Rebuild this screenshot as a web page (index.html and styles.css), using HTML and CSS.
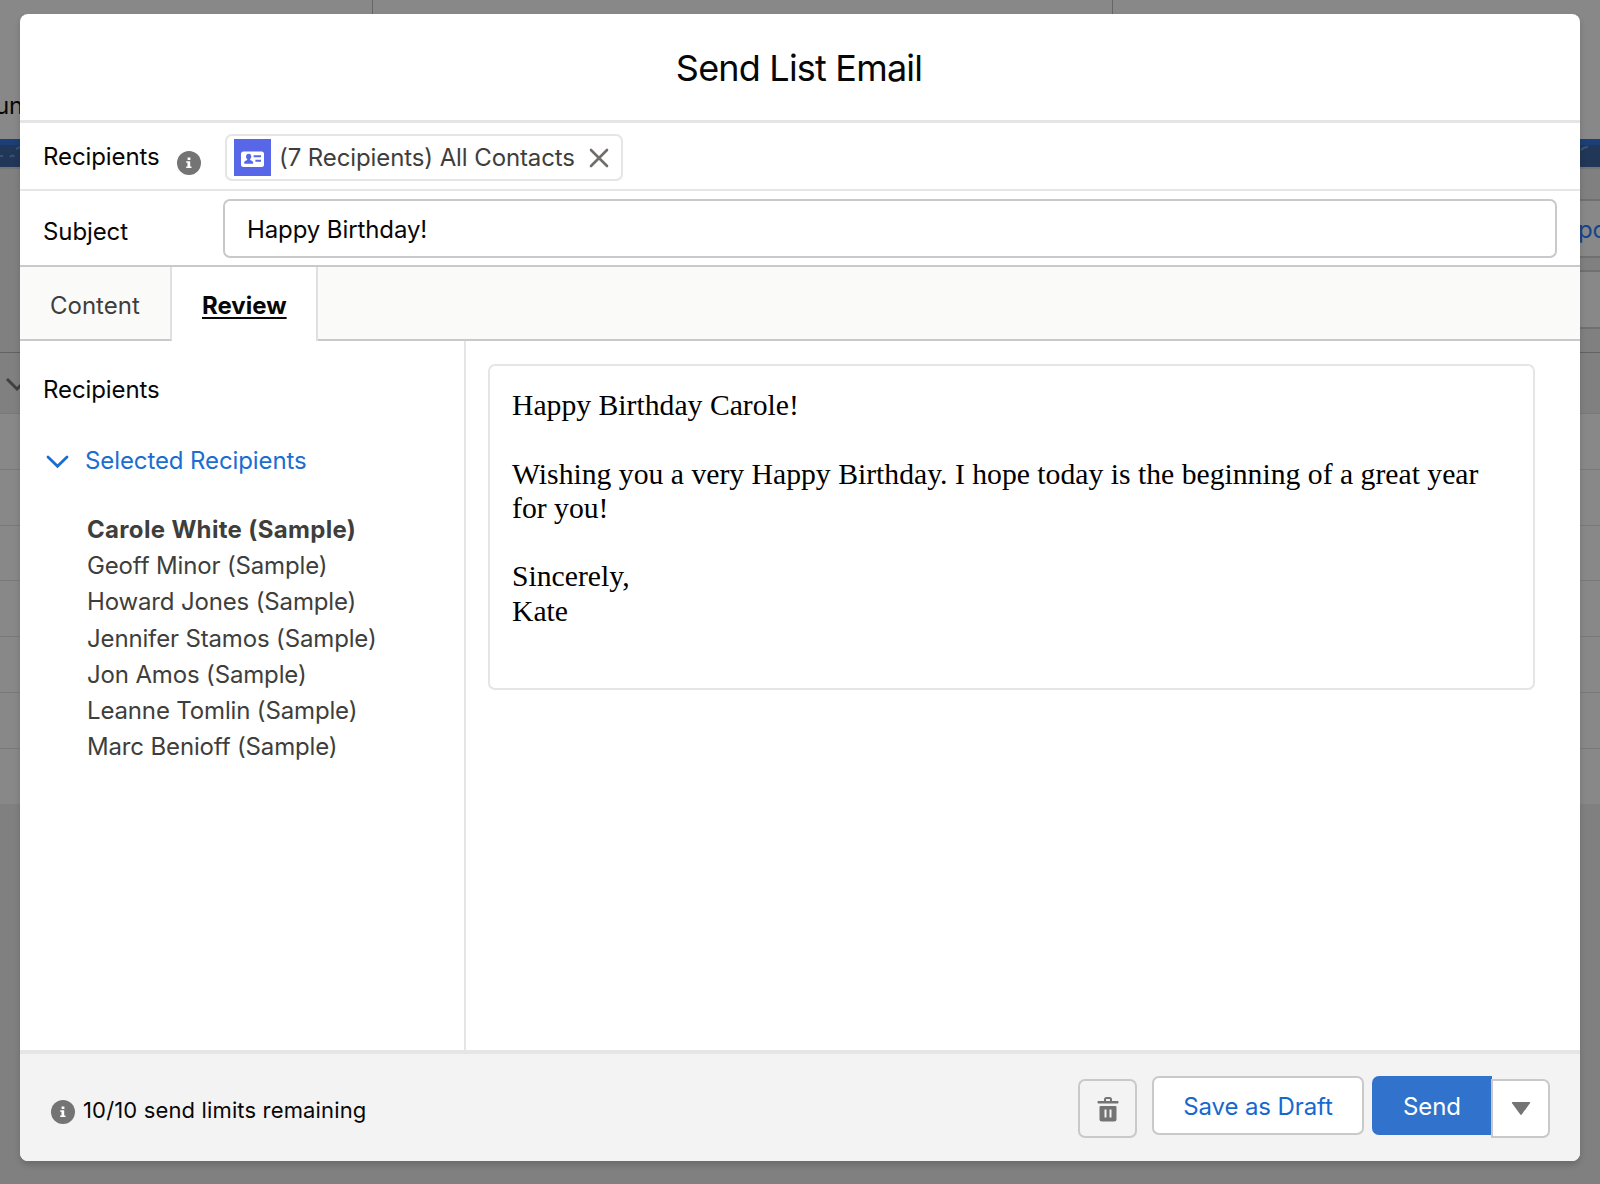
FILE: index.html
```html
<!DOCTYPE html>
<html lang="en">

<head>
    <meta charset="UTF-8">
    <meta name="viewport" content="width=device-width, initial-scale=1.0">
    <title>Send List Email</title>
    <link rel="stylesheet" href="styles.css">
</head>

<body>
    <!-- dimmed page behind the modal -->
    <div class="page">
        <div class="page-top">
            <div class="page-cols">
                <div></div>
                <div></div>
            </div>
            <div class="page-nav">un</div>
        </div>
        <div class="page-banner">
            <svg width="20" height="22" viewBox="0 0 20 22"><path d="M0 11h3M10 12q3-3 4 0M16 4l4-2" /></svg>
            <svg width="20" height="22" viewBox="0 0 20 22"><path d="M1 5q3-3 7-3" /></svg>
        </div>
        <div class="page-tools">
            <div class="page-button">pc</div>
            <div class="page-search"></div>
        </div>
        <div class="page-head">
            <svg width="24" height="16" viewBox="0 0 24 16"><path d="M2 2l10 10L22 2" /></svg>
        </div>
        <div class="page-row"></div>
        <div class="page-row"></div>
        <div class="page-row"></div>
        <div class="page-row"></div>
        <div class="page-row"></div>
        <div class="page-row"></div>
        <div class="page-row"></div>
    </div>

    <div class="modal">
        <div class="header">Send List Email</div>

        <div class="field recipients">
            <div class="label">Recipients</div>
            <svg class="info" viewBox="0 0 24 24">
                <circle cx="12" cy="12" r="12" />
                <path d="M10.6 6.4h2.8v2.6h-2.8zM9.2 10.2h4v5.4h1.3v1.5H9.2v-1.5h1.3v-3.9H9.2z" />
            </svg>
            <div class="pill">
                <svg class="contact" viewBox="0 0 37 37">
                    <rect class="contact-bg" width="37" height="37" />
                    <rect class="contact-card" x="7" y="12.5" width="23" height="15.5" rx="2.5" />
                    <path class="contact-bg" d="M14.7 14.7c1.6 0 2.6 1.2 2.6 2.8 0 1.3-.6 2-1.2 2.7-.3.5 0 .9.5 1.1 1.6.6 2.6 1.2 2.6 2.5 0 .7-.4 1-1 1h-7.1c-.6 0-1-.3-1-1 0-1.3 1.1-1.9 2.6-2.5.5-.2.8-.6.5-1.1-.7-.7-1.2-1.4-1.2-2.7 0-1.6 1.1-2.8 2.7-2.8zM19.6 16.2h7.4v2h-7.4zM21.4 20.8H27v2h-5.6z" />
                </svg>
                <span class="pill-text">(7 Recipients) All Contacts</span>
                <svg class="close" viewBox="0 0 20 20"><path d="M2 2l16 16M18 2L2 18" /></svg>
            </div>
        </div>

        <div class="field subject">
            <div class="label">Subject</div>
            <div class="input">Happy Birthday!</div>
        </div>

        <div class="tabs">
            <div class="tab">Content</div>
            <div class="tab active">Review</div>
            <div class="tab-rest"></div>
        </div>

        <div class="body">
            <div class="sidebar">
                <div class="side-title">Recipients</div>
                <div class="side-toggle">
                    <svg class="chevron" viewBox="0 0 22 14"><path d="M1.5 2L11 11.2 20.5 2" /></svg>
                    <span>Selected Recipients</span>
                </div>
                <div class="names">
                    <div class="name selected">Carole White (Sample)</div>
                    <div class="name">Geoff Minor (Sample)</div>
                    <div class="name">Howard Jones (Sample)</div>
                    <div class="name">Jennifer Stamos (Sample)</div>
                    <div class="name">Jon Amos (Sample)</div>
                    <div class="name">Leanne Tomlin (Sample)</div>
                    <div class="name">Marc Benioff (Sample)</div>
                </div>
            </div>
            <div class="preview-area">
                <div class="preview">
                    Happy Birthday Carole!<br><br>
                    Wishing you a very Happy Birthday. I hope today is the beginning of a great year<br>for you!<br><br>
                    Sincerely,<br>
                    Kate
                </div>
            </div>
        </div>

        <div class="footer">
            <svg class="info" viewBox="0 0 24 24">
                <circle cx="12" cy="12" r="12" />
                <path d="M10.6 6.4h2.8v2.6h-2.8zM9.2 10.2h4v5.4h1.3v1.5H9.2v-1.5h1.3v-3.9H9.2z" />
            </svg>
            <span class="limits">10/10 send limits remaining</span>
            <div class="button trash">
                <svg width="22" height="26" viewBox="0 0 22 26">
                    <path class="trash-handle" d="M8 5V3.5Q8 2 9.500 2h3Q14 2 14 3.500V5" />
                    <path d="M1.300 5h19.400q.8 0 .8.800v.8q0 .8-.8.800H1.300Q.5 7.400.5 6.600v-.8Q.5 5 1.300 5zM2.500 11q0-1 1-1h15q1 0 1 1v12q0 2.500-2.500 2.500H5Q2.500 25.500 2.500 23zM7.500 13.500v8h2v-8zM12.500 13.500v8h2v-8z" fill-rule="evenodd" />
                </svg>
            </div>
            <div class="button draft">Save as Draft</div>
            <div class="button send">Send</div>
            <div class="button more">
                <svg width="20" height="14" viewBox="0 0 20 14"><path d="M1.5 0h17q1.2 0 .4 1.200L10.900 12.300q-.9 1.200-1.800 0L1.100 1.200Q.3 0 1.500 0z" /></svg>
            </div>
        </div>
    </div>
</body>

</html>
```
FILE: styles.css
```css
* {
    box-sizing: border-box;
}

body {
    margin: 0;
    height: 1184px;
    overflow: hidden;
    position: relative;
    background-color: #808080;
    font-family: Inter, Arial, sans-serif;
    font-size: 24px;
    letter-spacing: -0.1px;
    color: #080707;
}

svg {
    display: block;
    flex-shrink: 0;
}

/*----- page behind -----*/
.page-top {
    height: 139px;
    background-color: #888888;
}

.page-cols {
    display: grid;
    grid-template-columns: 373px 740px;
    height: 90px;
}

.page-cols div {
    border-right: 1px solid #666666;
}

.page-nav {
    margin-left: -5px;
    line-height: 32px;
}

.page-banner {
    height: 28px;
    border-top: 6px solid #1b3f76;
    background-color: #203757;
    display: flex;
    justify-content: space-between;
}

.page-banner path {
    fill: none;
    stroke: #3d5270;
    stroke-width: 2;
}

.page-tools {
    height: 186px;
    border-top: 2px solid #757575;
    border-bottom: 1px solid #626262;
    padding: 30px 0 0 1560px;
}

.page-button {
    height: 59px;
    border: 2px solid #707070;
    border-right: 0;
    background-color: #888888;
    color: #14458a;
    padding-left: 16px;
    line-height: 57px;
}

.page-search {
    height: 59px;
    margin-top: 12px;
    border: 2px solid #707070;
    border-right: 0;
    background-color: #888888;
}

.page-head {
    height: 60px;
    padding: 24px 0 0 5px;
}

.page-head path {
    fill: none;
    stroke: #404040;
    stroke-width: 3;
}

.page-row {
    height: 55.8px;
    border-top: 1px solid #797979;
    background-color: #888888;
}

/*----- modal -----*/
.modal {
    position: absolute;
    top: 14px;
    left: 20px;
    width: 1560px;
    height: 1147px;
    display: flex;
    flex-direction: column;
    overflow: hidden;
    border-radius: 8px;
    background-color: white;
    box-shadow: 0 4px 6px rgba(0, 0, 0, 0.16);
}

.header {
    height: 109px;
    padding-right: 2px;
    border-bottom: 3px solid #e5e5e5;
    text-align: center;
    font-size: 36px;
    line-height: 108px;
    letter-spacing: -0.8px;
}

.field {
    display: flex;
    padding-left: 23px;
}

.recipients {
    height: 68px;
    border-bottom: 2px solid #e5e5e5;
    padding-top: 11px;
}

.label {
    line-height: 46px;
}

.info {
    width: 24px;
    height: 24px;
    fill: #747474;
}

.info path {
    fill: white;
}

.recipients .label {
    width: 134px;
}

.recipients .info {
    margin-top: 17px;
}

.pill {
    display: flex;
    align-items: center;
    width: 398px;
    height: 47px;
    margin-left: 24px;
    padding-left: 7px;
    border: 2px solid #e5e5e5;
    border-radius: 7px;
    color: #3e3e3c;
}

.contact {
    width: 37px;
    height: 37px;
}

.contact-bg {
    fill: #5867e8;
}

.contact-card {
    fill: white;
}

.pill-text {
    width: 308px;
    padding-left: 8px;
    white-space: nowrap;
}

.close {
    width: 20px;
    height: 20px;
    margin-left: 10px;
    fill: none;
    stroke: #706e6b;
    stroke-width: 2.6;
    stroke-linecap: round;
}

.subject {
    height: 76px;
    padding-top: 8px;
    padding-right: 23px;
    border-bottom: 2px solid #c9c9c9;
}

.subject .label {
    width: 180px;
    line-height: 66px;
}

.input {
    flex: 1;
    height: 59px;
    padding-left: 22px;
    border: 2px solid #c9c9c9;
    border-radius: 7px;
    line-height: 57px;
}

.tabs {
    display: flex;
    height: 74px;
    color: #3e3e3c;
}

.tab {
    width: 152px;
    height: 74px;
    padding-left: 30px;
    background-color: #fafaf9;
    border-right: 2px solid #e0e0e0;
    border-bottom: 2px solid #c9c9c9;
    letter-spacing: 0;
    line-height: 77px;
}

.active {
    width: 146px;
    background-color: white;
    border-bottom: 0;
    color: #080707;
    font-weight: bold;
    text-decoration: underline;
    text-decoration-thickness: 2px;
    text-underline-offset: 3px;
}

.tab-rest {
    flex: 1;
    background-color: #fafaf9;
    border-bottom: 2px solid #c9c9c9;
}

.body {
    display: flex;
    flex: 1;
}

.sidebar {
    width: 446px;
    padding-left: 23px;
    border-right: 2px solid #e5e5e5;
}

.side-title {
    padding-top: 31px;
    line-height: 36px;
}

.side-toggle {
    display: flex;
    align-items: center;
    gap: 16px;
    height: 36px;
    margin-top: 34px;
    padding-left: 3px;
    color: #1b6ed0;
}

.chevron {
    width: 23px;
    height: 14px;
    margin-top: 4px;
    fill: none;
    stroke: #1b6ed0;
    stroke-width: 2.8;
    stroke-linecap: round;
}

.names {
    margin-top: 34px;
    padding-left: 44px;
    color: #3e3e3c;
    letter-spacing: -0.15px;
}

.name {
    line-height: 36.2px;
}

.selected {
    font-weight: bold;
    letter-spacing: 0.33px;
}

.preview-area {
    flex: 1;
    padding: 23px 45px 0 22px;
}

.preview {
    height: 326px;
    padding: 22px 0 0 22px;
    border: 2px solid #e5e5e5;
    border-radius: 7px;
    color: black;
    font-family: "Liberation Serif", "Times New Roman", serif;
    font-size: 29.7px;
    letter-spacing: 0;
    line-height: 34.3px;
    white-space: nowrap;
}

.footer {
    display: flex;
    height: 111px;
    padding: 22px 30px 0 31px;
    border-top: 4px solid #e5e5e5;
    background-color: #f3f3f3;
}

.footer .info {
    margin-top: 24px;
}

.limits {
    margin-left: 8px;
    font-size: 22px;
    letter-spacing: 0.15px;
    line-height: 69px;
}

.button {
    height: 59px;
    display: flex;
    align-items: center;
    justify-content: center;
    border: 2px solid #c9c9c9;
    border-radius: 7px;
}

.button svg {
    fill: #747474;
}

.trash {
    width: 59px;
    margin-top: 3px;
    margin-left: auto;
}

.button .trash-handle {
    fill: none;
    stroke: #747474;
    stroke-width: 2;
}

.draft {
    width: 212px;
    margin-left: 15px;
    padding-top: 2px;
    background-color: white;
    color: #1768ce;
}

.send {
    width: 120px;
    margin-left: 8px;
    padding-top: 2px;
    border: 0;
    border-radius: 7px 0 0 7px;
    background-color: #3072cc;
    color: white;
}

.more {
    width: 59px;
    margin-top: 3px;
    margin-left: -1px;
    background-color: white;
    border-radius: 0 7px 7px 0;
}
```
